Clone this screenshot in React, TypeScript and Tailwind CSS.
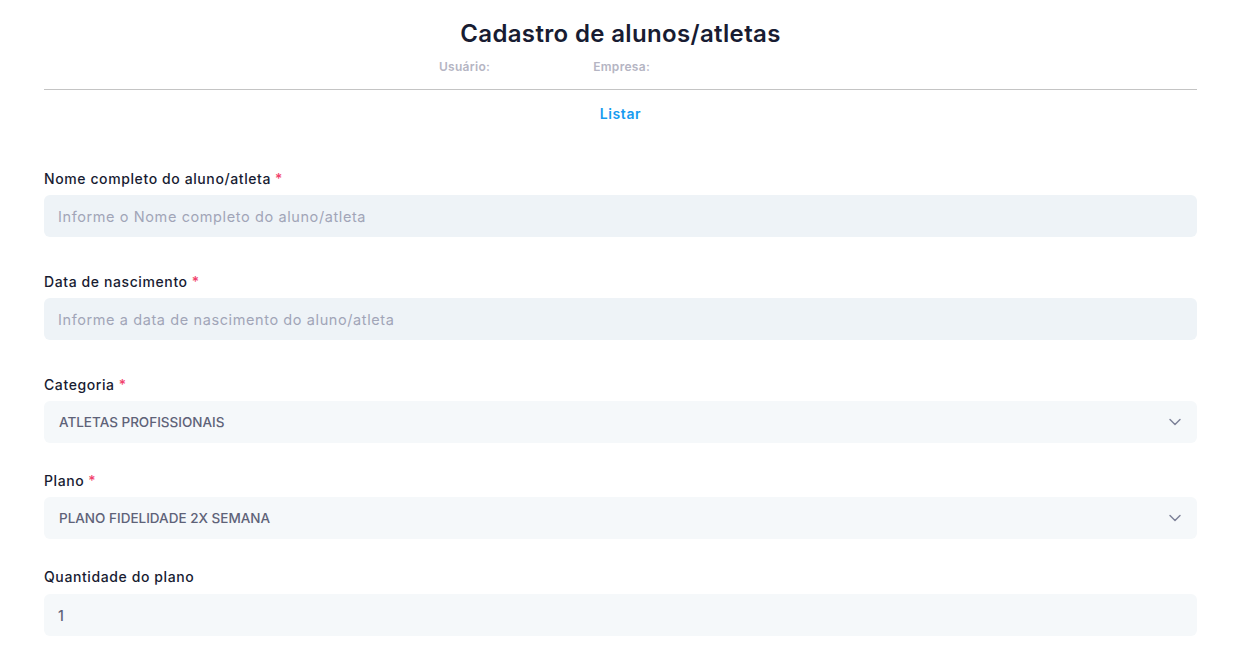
import { ChevronDown } from "lucide-react";

function Label({ text, required }: { text: string; required?: boolean }) {
  return (
    <label className="block text-[14px] font-medium tracking-[0.6px] text-[#181c32] leading-[20px] mb-[6px]">
      {text}
      {required && <span className="text-[#f1416c] ml-[4px]">*</span>}
    </label>
  );
}

function TextInput({ placeholder }: { placeholder: string }) {
  return (
    <input
      type="text"
      placeholder={placeholder}
      className="w-full h-[42px] px-[14px] rounded-md bg-[#eef3f7] text-[14.5px] tracking-[0.6px] text-[#5e6278] placeholder:text-[#a1a5b7] outline-none"
    />
  );
}

function Select({ value }: { value: string }) {
  return (
    <div className="w-full h-[42px] pl-[15px] pr-[12px] rounded-md bg-[#f5f8fa] flex items-center justify-between">
      <span className="text-[13.5px] font-medium text-[#5e6278]">{value}</span>
      <ChevronDown className="w-[20px] h-[20px] text-[#7e8299]" strokeWidth={1.75} />
    </div>
  );
}

export default function App() {
  return (
    <div className="min-h-screen bg-white font-['Inter',sans-serif]">
      <div className="w-[1153px] ml-[44px]">
        {/* Header */}
        <div className="pt-[18px] text-center">
          <h1 className="text-[24px] font-semibold tracking-[0.35px] text-[#181c32] leading-[32px]">
            Cadastro de alunos/atletas
          </h1>
          <div className="flex justify-center gap-[103px] mt-[9px] text-[12px] font-semibold tracking-[0.3px] text-[#b5b5c3] leading-[16px] pr-[152px]">
            <span>Usuário:</span>
            <span>Empresa:</span>
          </div>
        </div>
        <hr className="mt-[14px] border-t border-[#c4c4c4]" />
        <div className="text-center mt-[11px]">
          <a className="text-[14px] font-semibold tracking-[0.6px] text-[#159bf0] leading-[20px]">Listar</a>
        </div>

        <form className="mt-[44px]">
          <div className="mb-[35px]">
            <Label text="Nome completo do aluno/atleta" required />
            <TextInput placeholder="Informe o Nome completo do aluno/atleta" />
          </div>

          <div className="mb-[35px]">
            <Label text="Data de nascimento" required />
            <TextInput placeholder="Informe a data de nascimento do aluno/atleta" />
          </div>

          <div className="mb-[28px]">
            <Label text="Categoria" required />
            <Select value="ATLETAS PROFISSIONAIS" />
          </div>

          <div className="mb-[28px]">
            <Label text="Plano" required />
            <Select value="PLANO FIDELIDADE 2X SEMANA" />
          </div>

          <div>
            <Label text="Quantidade do plano" />
            <input
              type="text"
              defaultValue="1"
              className="w-full h-[42px] mt-[1px] px-[14px] rounded-md bg-[#f5f8fa] text-[14px] font-medium text-[#5e6278] outline-none"
            />
          </div>
        </form>
      </div>
    </div>
  );
}
